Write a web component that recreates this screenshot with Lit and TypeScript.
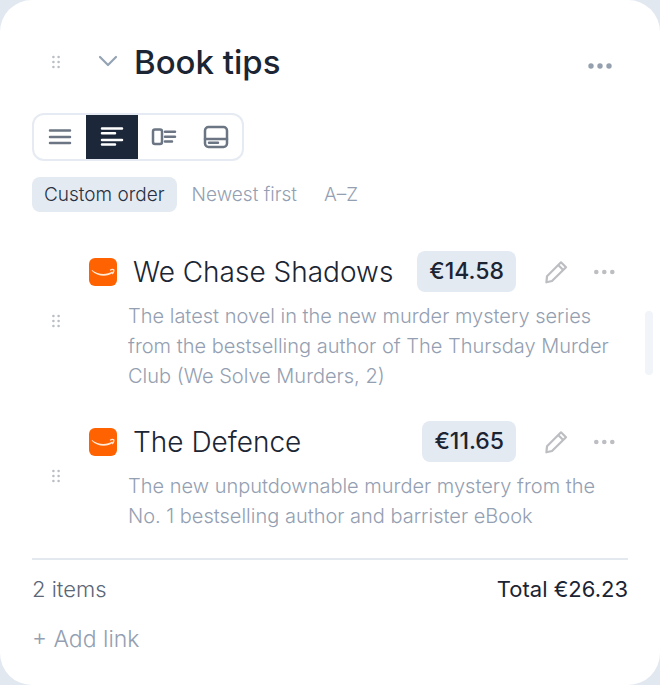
import {css, html, LitElement, svg} from "lit"
import {customElement, property, state} from "lit/decorators.js"

interface Book {
  title: string
  price: string
  description: string
}

const BOOKS: Book[] = [
  {
    title: "We Chase Shadows",
    price: "€14.58",
    description:
      "The latest novel in the new murder mystery series from the bestselling author of The Thursday Murder Club (We Solve Murders, 2)",
  },
  {
    title: "The Defence",
    price: "€11.65",
    description:
      "The new unputdownable murder mystery from the No. 1 bestselling author and barrister eBook",
  },
]

const ORDERS = ["Custom order", "Newest first", "A–Z"]

const VIEWS = [
  {
    name: "List",
    icon: svg`<path d="M3 5.500h20M3 12h20M3 18h20" />`,
  },
  {
    name: "Details",
    icon: svg`<path d="M3 3.500h20M3 8.300h13M3 15h20M3 19.600h13" />`,
  },
  {
    name: "Cards",
    icon: svg`
      <rect x="2" y="4.500" width="9" height="14.500" rx="2" />
      <path d="M14 6.700h10M14 11.700h10M14 16.500h7" />
    `,
  },
  {
    name: "Gallery",
    icon: svg`
      <rect x="2" y="2" width="22" height="20" rx="3.5" />
      <path d="M2 14h22M6 17.800h9" />
    `,
  },
]

const handleIcon = html`
  <svg class="handle" width="10" height="14" viewBox="0 0 10 14" aria-hidden="true">
    <circle cx="2.4" cy="2" r="1.3" />
    <circle cx="7.6" cy="2" r="1.3" />
    <circle cx="2.4" cy="7" r="1.3" />
    <circle cx="7.6" cy="7" r="1.3" />
    <circle cx="2.4" cy="12" r="1.3" />
    <circle cx="7.6" cy="12" r="1.3" />
  </svg>
`

@customElement("book-row")
export class BookRow extends LitElement {
  static styles = css`
    :host {
      display: flex;
      align-items: center;
      gap: 27px;
      padding-left: 19px;
    }
    .handle {
      flex: none;
      fill: #b9bdc4;
    }
    .body {
      flex: 1;
      min-width: 0;
    }
    .head {
      display: flex;
      align-items: center;
      height: 41px;
      padding-right: 12px;
    }
    .logo {
      flex: none;
    }
    .title {
      flex: 1;
      margin: 0 0 0 16px;
      font-size: 28px;
      font-weight: 300;
      line-height: 40px;
      color: #1b2533;
      white-space: nowrap;
    }
    .price {
      padding: 0 12px;
      border-radius: 8px;
      background: #e4eaf2;
      font-size: 23px;
      font-weight: 500;
      line-height: 41px;
      color: #1b2433;
    }
    .action {
      display: flex;
      margin-left: 24px;
      padding: 0;
      border: 0;
      background: none;
      color: #bcbec2;
      cursor: pointer;
    }
    .price + .action {
      margin-left: 28px;
    }
    .description {
      margin: 9px 12px 0 40px;
      font-size: 20px;
      font-weight: 300;
      line-height: 30px;
      color: #94a0b2;
    }
  `

  @property({attribute: false})
  book!: Book

  render() {
    return html`
      ${handleIcon}
      <div class="body">
        <div class="head">
          <svg class="logo" width="29" height="28" viewBox="0 0 29 28" aria-hidden="true">
            <rect x="1" width="28" height="28" rx="6" fill="#ff6200" />
            <path
              d="M4 12c6 4.800 14.500 5.200 20.300 1.500l.9 1.300C19 19.200 9.500 18.800 3.700 12.700z"
              fill="#ffe9d6"
            />
            <path
              d="M22 12.200c1.500-.8 3.200-.8 3.900-.3.200 1.300-.4 3-1.500 4.200"
              fill="none"
              stroke="#ffe9d6"
              stroke-width="1.200"
            />
          </svg>
          <h2 class="title">${this.book.title}</h2>
          <span class="price">${this.book.price}</span>
          <button class="action" aria-label="Edit ${this.book.title}">
            <svg
              width="24"
              height="24"
              viewBox="0 0 24 24"
              fill="none"
              stroke="currentColor"
              stroke-width="2.200"
              stroke-linejoin="round"
            >
              <path d="M17 2.300 22 7.200 8 21l-5.600 1.300L3 16.300z" />
              <path d="m14.200 5 5 5" />
            </svg>
          </button>
          <button class="action" aria-label="More for ${this.book.title}">
            <svg width="24" height="24" viewBox="0 0 24 24" fill="currentColor">
              <circle cx="4.300" cy="12" r="2.300" />
              <circle cx="12.300" cy="12" r="2.300" />
              <circle cx="20.300" cy="12" r="2.300" />
            </svg>
          </button>
        </div>
        <p class="description">${this.book.description}</p>
      </div>
    `
  }
}

@customElement("app-root")
export class AppRoot extends LitElement {
  static styles = css`
    :host {
      display: block;
      background: #e2e8f0;
      font-family: Inter, "Open Sans", sans-serif;
    }
    button {
      border: 0;
      background: none;
      font: inherit;
      cursor: pointer;
    }
    .card {
      position: relative;
      padding: 32px 32px 31px;
      border-radius: 32px;
      background: #fff;
    }
    .header {
      display: flex;
      align-items: center;
      height: 60px;
      padding: 0 16px 0 19px;
    }
    .handle {
      fill: #b9bdc4;
    }
    .toggle {
      display: flex;
      margin: 0 16px 0 37px;
      padding: 0;
      color: #94a3b4;
    }
    .heading {
      flex: 1;
      margin: 0;
      font-size: 33px;
      font-weight: 500;
      line-height: 44px;
      color: #1b2533;
    }
    .menu {
      display: flex;
      align-items: center;
      align-self: flex-end;
      height: 52px;
      padding: 0;
      color: #94a0ae;
    }
    .views {
      display: flex;
      width: fit-content;
      margin-top: 21px;
      border: 2px solid #e6ebf3;
      border-radius: 12px;
      overflow: hidden;
    }
    .view {
      display: flex;
      align-items: center;
      justify-content: center;
      width: 52px;
      height: 44px;
      padding: 0;
      color: #6b7583;
    }
    .view[aria-pressed="true"] {
      background: #1c2839;
      color: #fff;
    }
    .orders {
      display: flex;
      gap: 3px;
      margin-top: 16px;
    }
    .order {
      padding: 0 12px;
      border-radius: 8px;
      font-size: 19px;
      font-weight: 300;
      line-height: 35px;
      color: #94a0b2;
    }
    .order[aria-pressed="true"] {
      background: #e4eaf2;
      color: #273142;
    }
    .books {
      display: grid;
      gap: 30px;
      margin: 39px 0 27px;
      padding: 0;
      list-style: none;
    }
    .summary {
      display: flex;
      justify-content: space-between;
      padding-top: 14px;
      border-top: 2px solid #e4e8ef;
      font-size: 22px;
      line-height: 30px;
    }
    .count {
      font-weight: 300;
      color: #5b6678;
    }
    .total {
      color: #1b2433;
    }
    .add {
      display: block;
      margin-top: 20px;
      padding: 0;
      font-size: 23px;
      font-weight: 300;
      line-height: 30px;
      color: #94a0b2;
    }
    .scrollbar {
      position: absolute;
      top: 311px;
      right: 7px;
      width: 8px;
      height: 64px;
      border-radius: 4px;
      background: #f1f5f9;
    }
  `

  @state()
  private view = "Details"

  @state()
  private order = "Custom order"

  render() {
    return html`
      <main class="card">
        <header class="header">
          ${handleIcon}
          <button class="toggle" aria-label="Collapse">
            <svg
              width="20"
              height="20"
              viewBox="0 0 20 20"
              fill="none"
              stroke="currentColor"
              stroke-width="2.200"
              stroke-linecap="round"
              stroke-linejoin="round"
            >
              <path d="m2 5 8 8 8-8" />
            </svg>
          </button>
          <h1 class="heading">Book tips</h1>
          <button class="menu" aria-label="More">
            <svg width="24" height="24" viewBox="0 0 24 24" fill="currentColor">
              <circle cx="3" cy="12" r="2.700" />
              <circle cx="12" cy="12" r="2.700" />
              <circle cx="21" cy="12" r="2.700" />
            </svg>
          </button>
        </header>

        <div class="views" role="group" aria-label="View">
          ${VIEWS.map(
            ({name, icon}) => html`
              <button
                class="view"
                aria-label=${name}
                aria-pressed=${this.view === name}
                @click=${() => (this.view = name)}
              >
                <svg
                  width="26"
                  height="24"
                  viewBox="0 0 26 24"
                  fill="none"
                  stroke="currentColor"
                  stroke-width="2.500"
                  stroke-linecap="round"
                >
                  ${icon}
                </svg>
              </button>
            `
          )}
        </div>

        <div class="orders" role="group" aria-label="Sort order">
          ${ORDERS.map(
            name => html`
              <button
                class="order"
                aria-pressed=${this.order === name}
                @click=${() => (this.order = name)}
              >
                ${name}
              </button>
            `
          )}
        </div>

        <ul class="books">
          ${BOOKS.map(
            book => html`<li><book-row .book=${book}></book-row></li>`
          )}
        </ul>

        <footer>
          <div class="summary">
            <span class="count">${BOOKS.length} items</span>
            <span class="total">Total €26.23</span>
          </div>
          <button class="add">+ Add link</button>
        </footer>
        <div class="scrollbar"></div>
      </main>
    `
  }
}

declare global {
  interface HTMLElementTagNameMap {
    "app-root": AppRoot
    "book-row": BookRow
  }
}
